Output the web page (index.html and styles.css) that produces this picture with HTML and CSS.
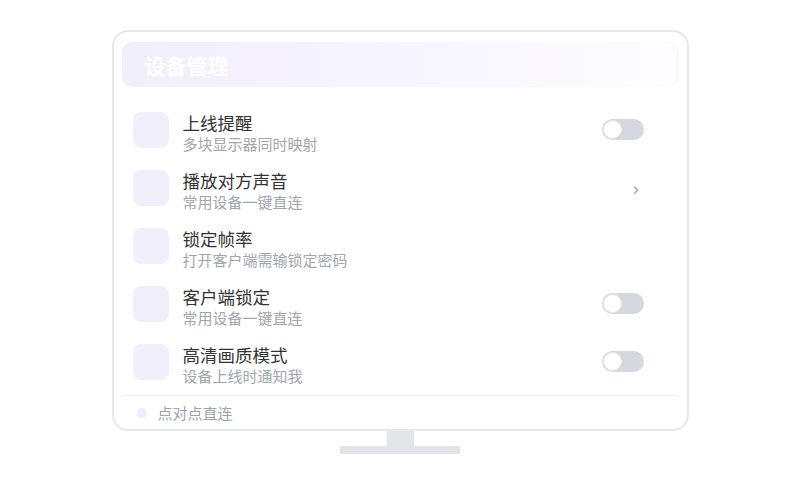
FILE: index.html
```html
<!DOCTYPE html>
<html>
<head>
    <title>设备管理</title>
    <link rel="stylesheet" href="styles.css">
</head>
<body>
    <div class="monitor">
        <div class="screen">
            <header class="screen-header">
                <h1>设备管理</h1>
            </header>
            <ul class="settings">
                <li class="setting">
                    <span class="setting-icon"></span>
                    <div class="setting-text">
                        <div class="setting-title">上线提醒</div>
                        <div class="setting-desc">多块显示器同时映射</div>
                    </div>
                    <span class="toggle"><span class="knob"></span></span>
                </li>
                <li class="setting">
                    <span class="setting-icon"></span>
                    <div class="setting-text">
                        <div class="setting-title">播放对方声音</div>
                        <div class="setting-desc">常用设备一键直连</div>
                    </div>
                    <span class="chevron">›</span>
                </li>
                <li class="setting">
                    <span class="setting-icon"></span>
                    <div class="setting-text">
                        <div class="setting-title">锁定帧率</div>
                        <div class="setting-desc">打开客户端需输锁定密码</div>
                    </div>
                </li>
                <li class="setting">
                    <span class="setting-icon"></span>
                    <div class="setting-text">
                        <div class="setting-title">客户端锁定</div>
                        <div class="setting-desc">常用设备一键直连</div>
                    </div>
                    <span class="toggle"><span class="knob"></span></span>
                </li>
                <li class="setting">
                    <span class="setting-icon"></span>
                    <div class="setting-text">
                        <div class="setting-title">高清画质模式</div>
                        <div class="setting-desc">设备上线时通知我</div>
                    </div>
                    <span class="toggle"><span class="knob"></span></span>
                </li>
            </ul>
            <footer class="screen-footer">
                <span class="dot"></span>
                <span>点对点直连</span>
            </footer>
        </div>
        <div class="stand-neck"></div>
        <div class="stand-base"></div>
    </div>
</body>
</html>
```

FILE: styles.css
```css
body {
    font-family: "Noto Sans CJK SC", "Noto Sans", sans-serif;
    margin: 0;
    padding: 0;
    background-color: #fff;
}
.monitor {
    display: flex;
    flex-direction: column;
    align-items: center;
    padding-top: 30px;
}
.screen {
    box-sizing: border-box;
    width: 577px;
    height: 401px;
    border: 2px solid #e6e8ec;
    border-radius: 16px;
    padding: 10px 9px 0 8px;
    display: flex;
    flex-direction: column;
}
.screen-header {
    height: 45px;
    flex-shrink: 0;
    border-radius: 10px;
    background: linear-gradient(90deg, #f2effd 0%, #f7f5fe 50%, #fdfcff 100%);
    border-right: 1px solid #f1f1f4;
    display: flex;
    align-items: center;
    padding-left: 23px;
}
.screen-header h1 {
    margin: 0;
    font-size: 21px;
    font-weight: bold;
    color: #fff;
}
.settings {
    list-style: none;
    margin: 14px 0 0 0;
    padding: 0;
}
.setting {
    display: flex;
    align-items: flex-start;
    height: 58px;
    box-sizing: border-box;
    padding: 11px 34px 0 11px;
}
.setting-icon {
    width: 36px;
    height: 36px;
    border-radius: 8px;
    background-color: #f2effd;
    flex-shrink: 0;
}
.setting-text {
    flex: 1;
    margin-left: 14px;
}
.setting-title {
    font-size: 17.5px;
    line-height: 22px;
    color: #333;
}
.setting-desc {
    font-size: 15px;
    line-height: 20px;
    color: #a0a5ae;
}
.toggle {
    margin-top: 7px;
    width: 42px;
    height: 21px;
    border-radius: 11px;
    background-color: #d5d8de;
    display: flex;
    align-items: center;
    padding-left: 1px;
    box-sizing: border-box;
}
.knob {
    width: 19px;
    height: 19px;
    border-radius: 50%;
    background-color: #fff;
    box-sizing: border-box;
    border: 1px solid #e5e7eb;
}
.chevron {
    width: 42px;
    text-align: right;
    padding-right: 5px;
    box-sizing: border-box;
    font-size: 20px;
    line-height: 36px;
    color: #9ca3af;
}
.screen-footer {
    margin-top: 4px;
    border-top: 1px solid #eef0f3;
    display: flex;
    align-items: center;
    height: 33px;
    padding-left: 15px;
    font-size: 15px;
    color: #9ca3af;
}
.dot {
    width: 10px;
    height: 10px;
    border-radius: 50%;
    background-color: #efebfd;
    margin-right: 11px;
}
.stand-neck {
    width: 27px;
    height: 15px;
    background-color: #e2e5ea;
}
.stand-base {
    width: 120px;
    height: 8px;
    background-color: #e2e5ea;
}
```
